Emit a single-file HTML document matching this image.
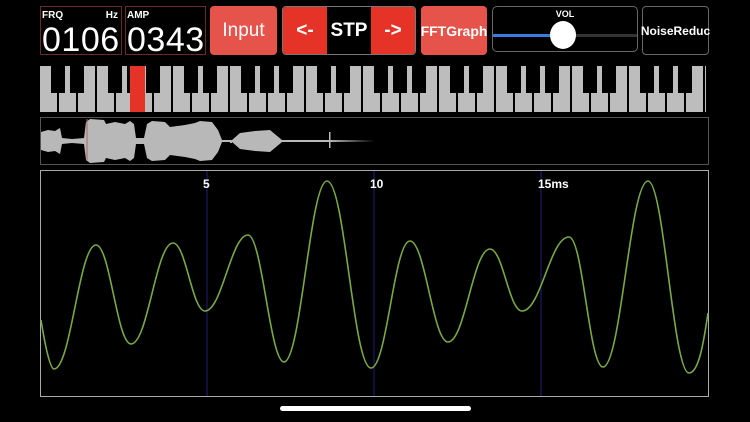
<!DOCTYPE html>
<html><head><meta charset="utf-8"><style>
html,body{margin:0;padding:0;background:#000;width:750px;height:422px;overflow:hidden;font-family:"Liberation Sans",sans-serif;color:#fff}
.abs{position:absolute;box-sizing:border-box}
.lbl{font-size:10px;font-weight:bold;position:absolute;top:3px}
.num{position:absolute;left:1px;top:14px;font-size:34px;letter-spacing:0.5px}
.btn{display:flex;align-items:center;justify-content:center;font-weight:bold;border-radius:4px}
</style></head><body>
<div class="abs" style="left:40px;top:6px;width:82px;height:49px;border:1px solid #6a2a26"><span class="lbl" style="left:1px">FRQ</span><span class="lbl" style="right:3px">Hz</span><span class="num">0106</span></div>
<div class="abs" style="left:125px;top:6px;width:81px;height:49px;border:1px solid #6a2a26"><span class="lbl" style="left:1px">AMP</span><span class="num">0343</span></div>
<div class="abs btn" style="left:210px;top:6px;width:67px;height:49px;background:#e5534a;font-size:19px;font-weight:normal">Input</div>
<div class="abs" style="left:282px;top:6px;width:134px;height:49px;border:1px solid #777;border-radius:4px;overflow:hidden;display:flex;font-size:19px;font-weight:bold">
<div class="btn" style="width:44px;background:#e53327;border-radius:0">&lt;-</div>
<div class="btn" style="width:44px;background:#000;border-radius:0">STP</div>
<div class="btn" style="flex:1;background:#e53327;border-radius:0">-&gt;</div></div>
<div class="abs btn" style="left:421px;top:6px;width:66px;height:49px;background:#e5534a;font-size:14px">FFTGraph</div>
<div class="abs" style="left:492px;top:6px;width:146px;height:46px;border:1px solid #666;border-radius:5px">
<div style="position:absolute;top:2px;width:100%;text-align:center;font-size:9px;font-weight:bold">VOL</div>
<div style="position:absolute;left:0;top:27px;width:60px;height:3px;background:#3a7be0"></div>
<div style="position:absolute;left:60px;top:27px;width:84px;height:3px;background:#333"></div>
<div style="position:absolute;left:57px;top:14px;width:26px;height:28px;border-radius:50%;background:#fff"></div></div>
<div class="abs btn" style="left:642px;top:6px;width:67px;height:49px;border:1px solid #666;font-size:12px">NoiseReduc</div>

<svg class="abs" style="left:0;top:0" width="750" height="422">
<defs>
<pattern id="w" x="40" y="0" width="19" height="422" patternUnits="userSpaceOnUse"><rect x="0" y="0" width="17" height="422" fill="#bdbdbd"/></pattern>
<pattern id="b" x="40" y="0" width="133" height="422" patternUnits="userSpaceOnUse">
<rect x="11" y="0" width="14" height="422" fill="#000"/><rect x="30" y="0" width="14" height="422" fill="#000"/>
<rect x="68" y="0" width="14" height="422" fill="#000"/><rect x="87" y="0" width="14" height="422" fill="#000"/><rect x="106" y="0" width="14" height="422" fill="#000"/></pattern>
</defs>
<rect x="40" y="66" width="666" height="46" fill="url(#w)"/>
<rect x="40" y="66" width="666" height="27" fill="url(#b)"/>
<rect x="130" y="66" width="15" height="46" fill="#e53327"/>
<rect x="40.5" y="117.5" width="668" height="47" fill="none" stroke="#555"/>
<g fill="#b8b8b8">
<path d="M41 132 L48 130 L55 131 L60 128 L62 138 L72 139 L84 138 L86 122 L90 119 L104 120 L106 124 L115 122 L125 124 L130 121 L134 124 L136 138 L144 138 L147 124 L152 121 L165 122 L170 127 L185 125 L195 123 L200 121 L212 122 L218 130 L222 140 L232 140 L240 133 L255 131 L270 130 L282 140 L330 140 L375 141 L330 142 L282 142 L270 152 L255 151 L240 149 L232 142 L222 142 L218 152 L212 160 L200 161 L195 159 L185 157 L170 155 L165 160 L152 161 L147 158 L144 144 L136 144 L134 158 L130 161 L125 158 L115 160 L106 158 L104 162 L90 163 L86 160 L84 144 L72 143 L62 144 L60 154 L55 151 L48 152 L41 150Z"/>
<rect x="329" y="132" width="1.5" height="16"/>
<rect x="230" y="140" width="2" height="3"/>
</g>
<line x1="87" y1="119" x2="87" y2="160" stroke="#a66" stroke-width="1"/>
<rect x="40.5" y="170.5" width="668" height="226" fill="none" stroke="#aaa"/>
<g stroke="#1a1a66" stroke-width="1.2"><line x1="207" y1="171" x2="207" y2="396"/><line x1="374" y1="171" x2="374" y2="396"/><line x1="541" y1="171" x2="541" y2="396"/></g>
<g font-family="Liberation Sans" font-size="12" font-weight="bold" fill="#fff"><text x="203" y="188">5</text><text x="370" y="188">10</text><text x="538" y="188">15ms</text></g>
<path fill="none" stroke="#7aa844" stroke-width="1.6" d="M41 320 C45 345 50 369 54 369 C71 369 79 245 96 245 C110 245 117 344 131 344 C148 344 156 243 173 243 C186 243 192 311 205 311 C222 311 231 235 248 235 C262 235 270 362 284 362 C301 362 310 181 327 181 C345 181 353 368 371 368 C387 368 394 241 410 241 C425 241 433 342 448 342 C465 342 473 249 490 249 C503 249 509 311 522 311 C541 311 550 237 569 237 C583 237 589 367 603 367 C621 367 630 181 648 181 C664 181 673 373 689 373 C699 373 704 340 708 313"/>
<rect x="280" y="406" width="191" height="5" rx="2.5" fill="#fff"/>
</svg>
</body></html>
